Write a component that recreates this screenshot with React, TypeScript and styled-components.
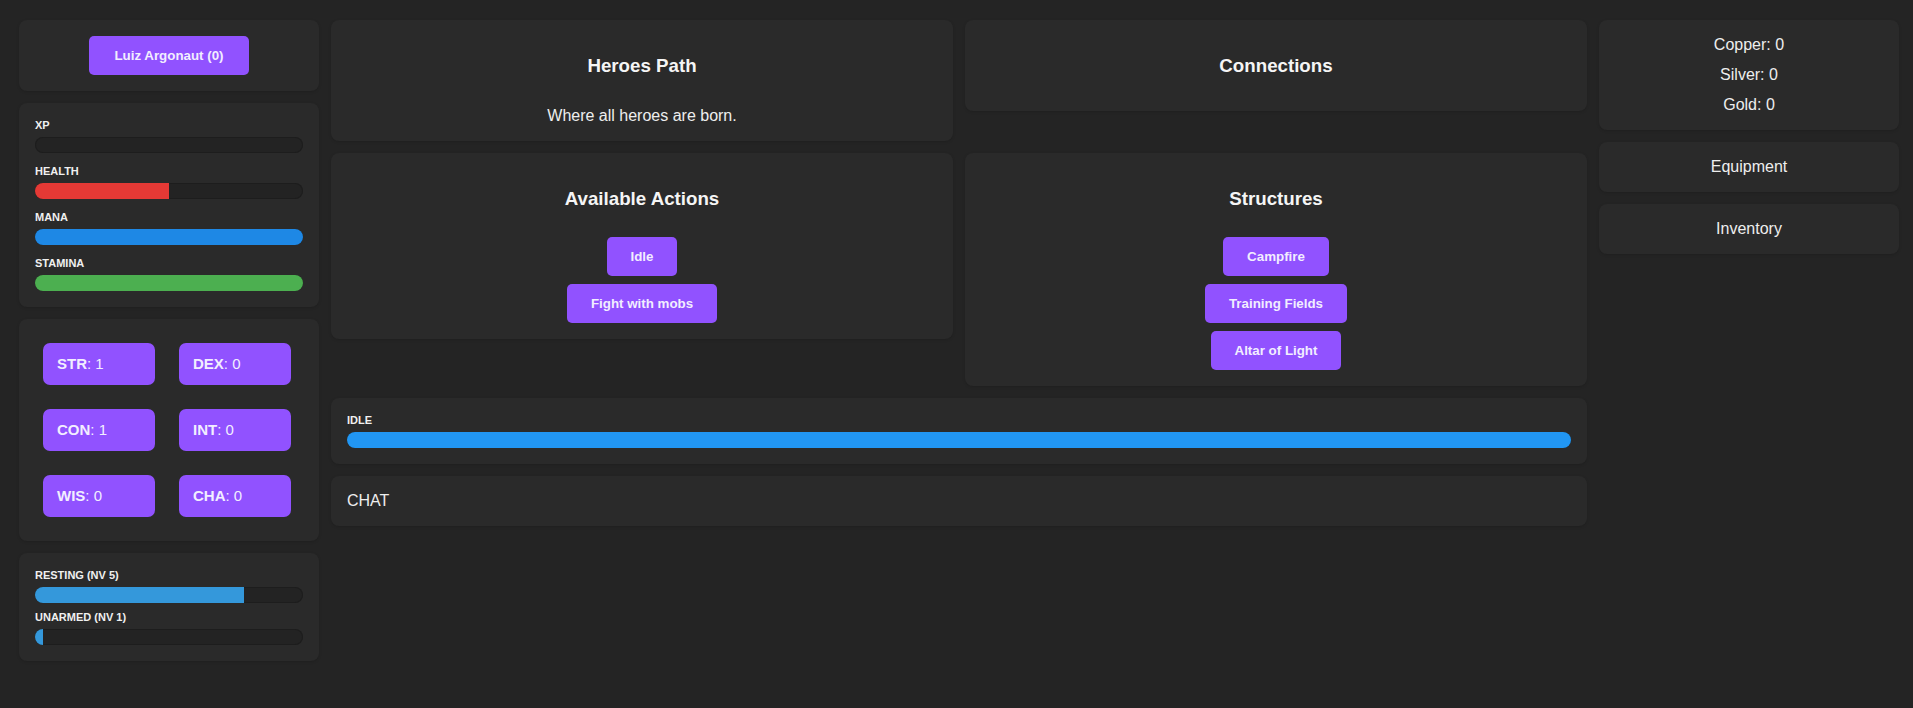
import React from "react";
import styled, { createGlobalStyle } from "styled-components";

const Global = createGlobalStyle`
  html, body { margin: 0; padding: 0; background: #242424; }
  body {
    font-family: "Liberation Sans", Arial, sans-serif;
    color: #f0f0f0;
  }
  * { box-sizing: border-box; }
`;

const Page = styled.div`
  display: grid;
  grid-template-columns: 300px 1fr 300px;
  gap: 12px;
  align-items: start;
  padding: 20px 14px 20px 19px;
  min-height: 708px;
  background: #242424;
`;

const Column = styled.div`
  display: flex;
  flex-direction: column;
  gap: 12px;
`;

const Middle = styled.div`
  display: grid;
  grid-template-columns: 1fr 1fr;
  gap: 12px;
  align-items: start;
`;

const Card = styled.section<{ $pad?: string; $center?: boolean; $span?: boolean }>`
  background: #2a2a2a;
  border-radius: 8px;
  padding: ${(p) => p.$pad ?? "16px"};
  box-shadow: 0 1px 3px rgba(0, 0, 0, 0.15);
  display: flex;
  flex-direction: column;
  align-items: ${(p) => (p.$center ? "center" : "stretch")};
  text-align: ${(p) => (p.$center ? "center" : "left")};
  grid-column: ${(p) => (p.$span ? "1 / -1" : "auto")};
`;

const Title = styled.h3`
  margin: 18.72px 0;
  font-size: 18.72px;
  font-weight: bold;
  line-height: normal;
  color: #f5f5f5;
`;

const Description = styled.p`
  margin: 11.5px 0 0;
  font-size: 16px;
  line-height: normal;
  color: #eeeeee;
`;

const ButtonStack = styled.div`
  margin-top: 9px;
  display: flex;
  flex-direction: column;
  align-items: center;
  gap: 8px;
`;

const PurpleButton = styled.button`
  background: #9152ff;
  color: #f2eeff;
  border: none;
  border-radius: 5px;
  padding: 12px 24px;
  font-family: "Liberation Sans", Arial, sans-serif;
  font-size: 13.333px;
  font-weight: bold;
  line-height: normal;
  cursor: pointer;
`;

const NameRow = styled.div`
  display: flex;
  justify-content: center;
`;

const NameButton = styled(PurpleButton)`
  padding: 12px 25px;
`;

const BarList = styled.div<{ $gap: number }>`
  display: flex;
  flex-direction: column;
  gap: ${(p) => p.$gap}px;
`;

const BarItem = styled.div`
  display: flex;
  flex-direction: column;
`;

const BarLabel = styled.div`
  font-size: 11px;
  font-weight: bold;
  line-height: 13px;
  margin-bottom: 5px;
  text-transform: uppercase;
  color: #f0f0f0;
`;

const Track = styled.div`
  height: 16px;
  border-radius: 8px;
  background: #232323;
  box-shadow: inset 0 0 0 1px #1d1d1d;
  overflow: hidden;
  display: flex;
`;

const Fill = styled.div<{ $color: string }>`
  height: 100%;
  background: ${(p) => p.$color};
`;

const StatGrid = styled.div`
  display: grid;
  grid-template-columns: 112px 112px;
  column-gap: 24px;
  row-gap: 24px;
`;

const StatButton = styled.button`
  background: #9152ff;
  color: #f2eeff;
  border: none;
  border-radius: 7px;
  padding: 12px 14px;
  height: 42px;
  text-align: left;
  font-family: "Liberation Sans", Arial, sans-serif;
  font-size: 15px;
  line-height: 18px;
  cursor: pointer;
  strong { font-weight: bold; }
`;

const CurrencyList = styled.div`
  display: flex;
  flex-direction: column;
  align-items: center;
  gap: 12px;
  font-size: 16px;
  line-height: 18px;
  color: #eeeeee;
`;

const PanelText = styled.div`
  font-size: 16px;
  line-height: 18px;
  color: #eeeeee;
`;

type Bar = { label: string; pct: number; color: string };

const vitals: Bar[] = [
  { label: "XP", pct: 0, color: "#9152ff" },
  { label: "Health", pct: 50, color: "#e53935" },
  { label: "Mana", pct: 100, color: "#1e88e5" },
  { label: "Stamina", pct: 100, color: "#4caf50" },
];

const skills: Bar[] = [
  { label: "Resting (NV 5)", pct: 78, color: "#3498db" },
  { label: "Unarmed (NV 1)", pct: 3, color: "#3498db" },
];

const stats = [
  ["STR", 1],
  ["DEX", 0],
  ["CON", 1],
  ["INT", 0],
  ["WIS", 0],
  ["CHA", 0],
] as const;

function Bars({ items, gap }: { items: Bar[]; gap: number }) {
  return (
    <BarList $gap={gap}>
      {items.map((b) => (
        <BarItem key={b.label}>
          <BarLabel>{b.label}</BarLabel>
          <Track>
            <Fill $color={b.color} style={{ width: `${b.pct}%` }} />
          </Track>
        </BarItem>
      ))}
    </BarList>
  );
}

export default function App() {
  return (
    <>
      <Global />
      <Page>
        <Column>
          <Card>
            <NameRow>
              <NameButton>Luiz Argonaut (0)</NameButton>
            </NameRow>
          </Card>
          <Card>
            <Bars items={vitals} gap={12} />
          </Card>
          <Card $pad="24px">
            <StatGrid>
              {stats.map(([k, v]) => (
                <StatButton key={k}>
                  <strong>{k}</strong>: {v}
                </StatButton>
              ))}
            </StatGrid>
          </Card>
          <Card>
            <Bars items={skills} gap={8} />
          </Card>
        </Column>

        <Middle>
          <Card $center>
            <Title>Heroes Path</Title>
            <Description>Where all heroes are born.</Description>
          </Card>
          <Card $center>
            <Title>Connections</Title>
          </Card>
          <Card $center>
            <Title>Available Actions</Title>
            <ButtonStack>
              <PurpleButton>Idle</PurpleButton>
              <PurpleButton>Fight with mobs</PurpleButton>
            </ButtonStack>
          </Card>
          <Card $center>
            <Title>Structures</Title>
            <ButtonStack>
              <PurpleButton>Campfire</PurpleButton>
              <PurpleButton>Training Fields</PurpleButton>
              <PurpleButton>Altar of Light</PurpleButton>
            </ButtonStack>
          </Card>
          <Card $span>
            <Bars items={[{ label: "Idle", pct: 100, color: "#2196f3" }]} gap={0} />
          </Card>
          <Card $span>
            <PanelText>CHAT</PanelText>
          </Card>
        </Middle>

        <Column>
          <Card $center>
            <CurrencyList>
              <div>Copper: 0</div>
              <div>Silver: 0</div>
              <div>Gold: 0</div>
            </CurrencyList>
          </Card>
          <Card $center>
            <PanelText>Equipment</PanelText>
          </Card>
          <Card $center>
            <PanelText>Inventory</PanelText>
          </Card>
        </Column>
      </Page>
    </>
  );
}
